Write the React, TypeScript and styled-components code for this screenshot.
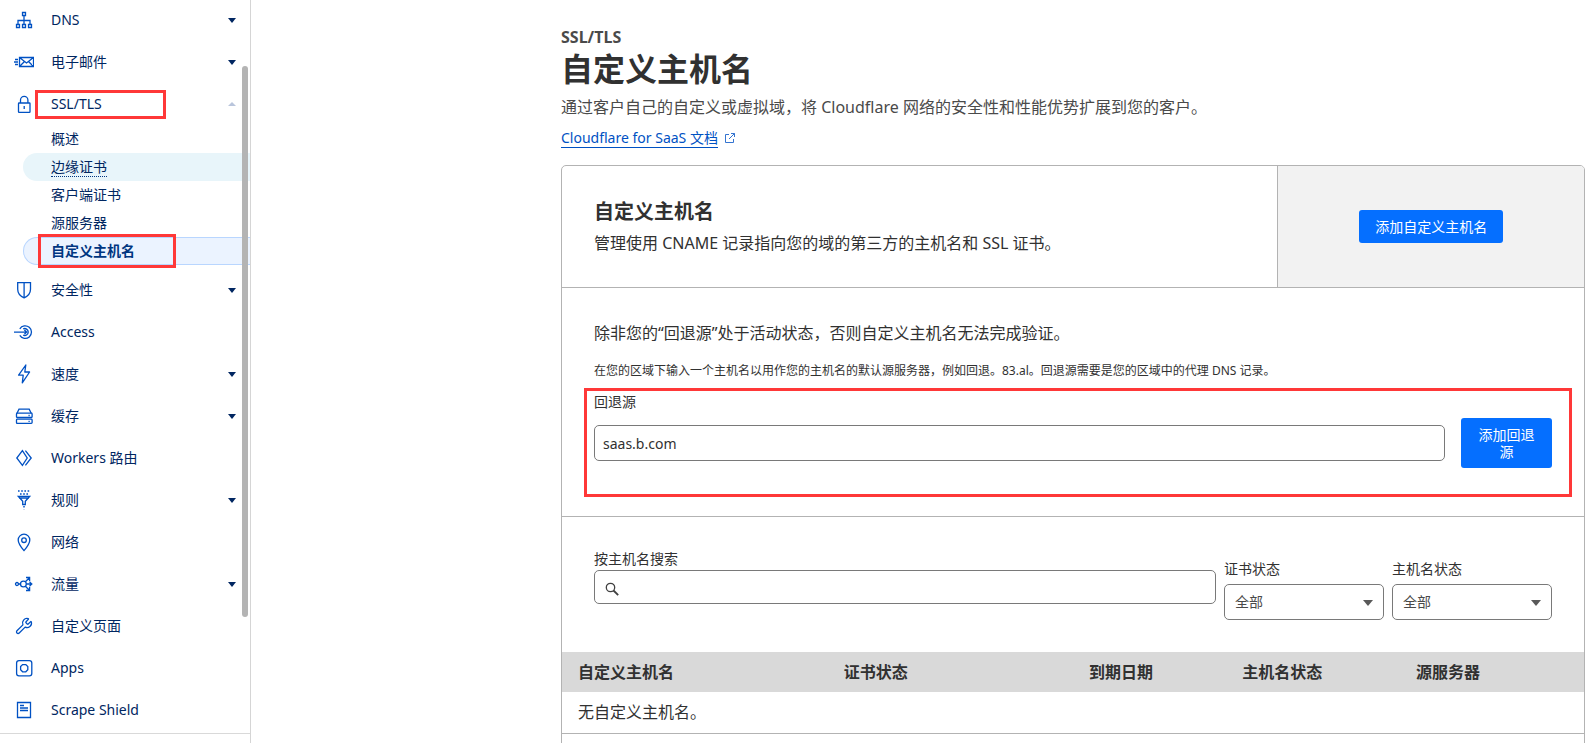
import React from "react";
import styled, { createGlobalStyle, css } from "styled-components";
import { Wrench } from "lucide-react";

const GlobalStyle = createGlobalStyle`
  *, *::before, *::after { box-sizing: border-box; }
  body {
    margin: 0;
    background: #fff;
    color: #313131;
    font-family: "Noto Sans", "Noto Sans CJK SC", sans-serif;
    font-size: 14px;
    line-height: 20px;
  }
  h1, h2, p, ul { margin: 0; padding: 0; }
  ul { list-style: none; }
  button, input, select { font: inherit; color: inherit; }
`;

const Page = styled.div`
  display: flex;
  height: 100vh;
  overflow: hidden;
`;

/* ---------- Sidebar ---------- */

const Sidebar = styled.aside`
  position: relative;
  display: flex;
  flex-direction: column;
  flex: 0 0 251px;
  border-right: 1px solid #d5d5d5;
`;

const Nav = styled.nav`
  flex: none;
  margin-top: -1px;
  padding-bottom: 2px;
  border-bottom: 1px solid #d9d9d9;
`;

const NavLink = styled.a`
  position: relative;
  display: flex;
  align-items: center;
  height: 42px;
  padding: 0 14px;
  color: #002661;
  text-decoration: none;
`;

const NavIcon = styled.svg`
  flex: none;
  width: 20px;
  height: 20px;
  margin-right: 17px;
  color: #0051c3;
  fill: none;
  stroke: currentColor;
  stroke-width: 1.3;
`;

const NavLabel = styled.span`
  flex: 1;
`;

const Caret = styled.span<{ $open?: boolean }>`
  width: 0;
  height: 0;
  border: 4px solid transparent;
  ${(p) =>
    p.$open
      ? css`
          border-width: 0 4px 4px;
          border-bottom-color: #b9c5dc;
        `
      : css`
          border-width: 5px 4px 0;
          border-top-color: #002661;
        `}
`;

const SubList = styled.ul`
  padding: 0 0 4px 23px;
`;

const SubLink = styled.a<{ $state?: "hover" | "active" }>`
  position: relative;
  display: flex;
  align-items: center;
  height: 28px;
  padding-left: 27px;
  border: 1px solid transparent;
  border-right: 0;
  border-radius: 14px 0 0 14px;
  color: #002661;
  text-decoration: none;
  ${(p) =>
    p.$state === "hover" &&
    css`
      background: #e8f5fa;
    `}
  ${(p) =>
    p.$state === "active" &&
    css`
      background: #ebf3ff;
      border-color: #b9d6ff;
      color: #003681;
      font-weight: 700;
    `}
`;

const SubText = styled.span<{ $dotted?: boolean }>`
  border-bottom: 1px ${(p) => (p.$dotted ? "dotted #003681" : "solid transparent")};
  line-height: 19px;
`;

const ScrollThumb = styled.div`
  position: absolute;
  top: 66px;
  right: 2px;
  width: 6px;
  height: 551px;
  border-radius: 3px;
  background: #b4b4b4;
`;

const Mark = styled.span<{ $inset: string }>`
  position: absolute;
  inset: ${(p) => p.$inset};
  border: 3px solid #ff3838;
  pointer-events: none;
`;

/* ---------- Main column ---------- */

const Main = styled.main`
  flex: 1;
  min-width: 0;
  padding: 27px 10px 0;
`;

const Content = styled.div`
  width: 100%;
  max-width: 1024px;
  margin-left: auto;
`;

const Eyebrow = styled.p`
  color: #4a4a4a;
  font-size: 16px;
  font-weight: 700;
`;

const Title = styled.h1`
  margin-bottom: 4px;
  font-size: 32px;
  font-weight: 700;
  line-height: 44px;
`;

const Lead = styled.p`
  color: #4a4a4a;
  font-size: 16px;
  line-height: 24px;
`;

const DocRow = styled.p`
  display: flex;
  align-items: center;
  gap: 6px;
  margin-top: 9px;
`;

const DocLink = styled.a`
  border-bottom: 1px solid #0051c3;
  color: #0051c3;
  line-height: 19px;
  text-decoration: none;
`;

const ExternalIcon = styled.svg`
  width: 12px;
  height: 12px;
  fill: none;
  stroke: #3474d0;
`;

const Card = styled.section`
  margin-top: 17px;
  border: 1px solid #b3b3b3;
  border-radius: 5px;
  overflow: hidden;
`;

const CardHead = styled.header`
  display: grid;
  grid-template-columns: 7fr 3fr;
  border-bottom: 1px solid #b3b3b3;
`;

const HeadText = styled.div`
  padding: 30px 32px 29px;
`;

const CardTitle = styled.h2`
  font-size: 20px;
  font-weight: 700;
  line-height: 32px;
`;

const Text = styled.p<{ $small?: boolean }>`
  font-size: ${(p) => (p.$small ? 12 : 16)}px;
  line-height: ${(p) => (p.$small ? 20 : 30)}px;
`;

const HeadAction = styled.div`
  display: flex;
  align-items: center;
  justify-content: center;
  border-left: 1px solid #b3b3b3;
  background: #f2f2f2;
`;

const Button = styled.button<{ $narrow?: boolean }>`
  flex: none;
  width: ${(p) => (p.$narrow ? "91px" : "auto")};
  padding: 8px 16px;
  border: 0;
  border-radius: 3px;
  background: #056fff;
  color: #fff;
  line-height: 17px;
`;

const Origin = styled.div`
  padding: 30px 32px 19px;
  border-bottom: 1px solid #b3b3b3;
`;

const OriginHint = styled(Text)`
  margin: 13px 0 7px;
`;

const OriginBox = styled.div`
  position: relative;
  height: 109px;
  padding-top: 4px;
`;

const Label = styled.label`
  display: block;
`;

const OriginRow = styled.div`
  display: flex;
  align-items: center;
  gap: 16px;
  padding-top: 6px;
`;

const field = css`
  border: 1px solid #797979;
  border-radius: 5px;
  background: #fff;
`;

const TextInput = styled.input`
  ${field}
  flex: 1;
  min-width: 0;
  height: 36px;
  padding: 0 8px;
`;

const Filters = styled.div`
  display: flex;
  gap: 8px;
  padding: 32px;
`;

const SearchField = styled.div`
  flex: 1;
  min-width: 0;
`;

const SearchBox = styled.div`
  ${field}
  display: flex;
  align-items: center;
  gap: 8px;
  height: 34px;
  margin-top: 1px;
  padding: 0 10px;
`;

const SearchIcon = styled.svg`
  flex: none;
  width: 14px;
  height: 14px;
  margin-top: 3px;
  fill: none;
  stroke: #404040;
`;

const SearchInput = styled.input`
  flex: 1;
  min-width: 0;
  border: 0;
  outline: 0;
  background: transparent;
`;

const SelectField = styled.div`
  flex: 0 0 160px;
  padding-top: 10px;
`;

const SelectBox = styled.div`
  position: relative;
  margin-top: 5px;
`;

const Select = styled.select`
  ${field}
  appearance: none;
  display: block;
  width: 100%;
  height: 36px;
  padding: 0 28px 0 10px;
  color: #4a4a4a;
`;

const SelectArrow = styled.span`
  position: absolute;
  top: 16px;
  right: 11px;
  border: 5px solid transparent;
  border-width: 6px 5px 0;
  border-top-color: #595959;
  pointer-events: none;
`;

const Table = styled.table`
  width: 100%;
  border-collapse: collapse;
  table-layout: fixed;
  font-size: 16px;
  text-align: left;
`;

const Th = styled.th<{ $width: number }>`
  width: ${(p) => p.$width}%;
  height: 40px;
  padding: 0 16px;
  background: #d9d9d9;
  font-weight: 600;
`;

const Td = styled.td`
  height: 41px;
  padding: 0 16px;
  border-bottom: 1px solid #b3b3b3;
`;

const CardFoot = styled.footer`
  height: 48px;
`;

/* ---------- Data ---------- */

const icons: Record<string, React.ReactNode> = {
  dns: (
    <path d="M8.5 2.5h3v3h-3zM10 5.5v9M4 14.5v-4h12v4M2.5 14.5h3v3h-3zM8.5 14.5h3v3h-3zM14.5 14.5h3v3h-3z" />
  ),
  mail: (
    <path d="M5.5 5.5h14v9h-14zM5.5 5.5l7 5.5 7-5.5M5.5 14.5l5-5M19.5 14.5l-5-5M1 7.5h3M0 10h4M1 12.5h3" />
  ),
  lock: (
    <>
      <rect x="4.5" y="9" width="11.5" height="9.3" rx="0.6" />
      <path d="M6.5 9V6a3.7 3.7 0 0 1 7.4 0v3M10.2 12v3" />
    </>
  ),
  shield: <path d="M3.7 2.6h12.8v6.6c0 4-2.8 7-6.4 8.6-3.6-1.6-6.4-4.6-6.4-8.6zM10.1 2.6v15" />,
  access: (
    <path d="M5.8 6.8a6.3 6.3 0 1 1 0 6.6M9.2 6.9a3.5 3.5 0 1 1 0 6.3M0 10.1h12.6M10.4 8l2.2 2.1-2.2 2.1" />
  ),
  bolt: <path d="M11.8 1L4.6 11.2h4.6l-.9 7.6L15.6 8h-4.8z" strokeLinejoin="round" />,
  cache: (
    <>
      <path d="M3 7.2l2-4.1h10.2l2 4.1M14.5 9.5h1.2M14.5 15.3h1.2" />
      <rect x="2.5" y="7.2" width="15.6" height="4.3" rx="0.8" />
      <rect x="2.5" y="13.2" width="15.6" height="4.2" rx="0.8" />
    </>
  ),
  workers: <path d="M8.4 2.6L2.8 10l5.6 7.4L13.2 10zM11.4 2.6L17.2 10l-5.8 7.4" />,
  rules: (
    <>
      <path d="M4.3 6.3h11.4l-4.4 4.9v3.3H8.7v-3.3zM5 8h10" />
      <path d="M4 1h12M6 4h8M10 16v3.5" strokeDasharray="1.6 1.6" strokeWidth="1.5" />
    </>
  ),
  pin: (
    <>
      <path d="M10 18.6C6.5 14.6 4.2 11.5 4.2 8a5.8 5.8 0 0 1 11.6 0c0 3.5-2.3 6.6-5.8 10.6z" />
      <circle cx="10" cy="8.2" r="2.3" />
    </>
  ),
  traffic: (
    <>
      <circle cx="3" cy="10" r="1.5" />
      <circle cx="9.4" cy="10" r="2.9" />
      <path d="M4.5 10h2M12.3 10h5.4M15.6 8l2.2 2-2.2 2M11.4 7.8l4-4M12 3.5h3.6v3.7M11.4 12.2l4 4M12 16.5h3.6v-3.7" />
    </>
  ),
  wrench: <Wrench x={1} y={1} width={18} height={18} strokeWidth={1.7} />,
  apps: (
    <>
      <rect x="2.6" y="2.6" width="15.2" height="15.2" rx="2.4" />
      <path d="M8.6 6.6h3.2l2 2v3.2l-2 2H8.6l-2-2V8.6z" />
    </>
  ),
  page: <path d="M3.5 2.5h13v15h-13zM6 5.5h4M6 8h8M6 10.5h8" />,
};

const before = [
  { icon: "dns", label: "DNS", menu: true },
  { icon: "mail", label: "电子邮件", menu: true },
];

const after = [
  { icon: "shield", label: "安全性", menu: true },
  { icon: "access", label: "Access" },
  { icon: "bolt", label: "速度", menu: true },
  { icon: "cache", label: "缓存", menu: true },
  { icon: "workers", label: "Workers 路由" },
  { icon: "rules", label: "规则", menu: true },
  { icon: "pin", label: "网络" },
  { icon: "traffic", label: "流量", menu: true },
  { icon: "wrench", label: "自定义页面" },
  { icon: "apps", label: "Apps" },
  { icon: "page", label: "Scrape Shield" },
];

const columns: [string, number][] = [
  ["自定义主机名", 26],
  ["证书状态", 24],
  ["到期日期", 15],
  ["主机名状态", 17],
  ["源服务器", 18],
];

function NavItem(props: {
  icon: string;
  label: string;
  menu?: boolean;
  open?: boolean;
  mark?: string;
  children?: React.ReactNode;
}) {
  return (
    <li>
      <NavLink href="#">
        <NavIcon viewBox="0 0 20 20" aria-hidden="true">
          {icons[props.icon]}
        </NavIcon>
        <NavLabel>{props.label}</NavLabel>
        {props.menu && <Caret $open={props.open} />}
        {props.mark && <Mark $inset={props.mark} />}
      </NavLink>
      {props.children}
    </li>
  );
}

function StatusSelect({ id, label }: { id: string; label: string }) {
  return (
    <SelectField>
      <Label htmlFor={id}>{label}</Label>
      <SelectBox>
        <Select id={id}>
          <option>全部</option>
        </Select>
        <SelectArrow />
      </SelectBox>
    </SelectField>
  );
}

export default function App() {
  return (
    <Page lang="zh-CN">
      <GlobalStyle />
      <Sidebar>
        <Nav>
          <ul>
            {before.map((item) => (
              <NavItem key={item.label} {...item} />
            ))}
            <NavItem icon="lock" label="SSL/TLS" menu open mark="7px 84px 6px 35px">
              <SubList>
                <li>
                  <SubLink href="#">
                    <SubText>概述</SubText>
                  </SubLink>
                </li>
                <li>
                  <SubLink href="#" $state="hover">
                    <SubText $dotted>边缘证书</SubText>
                  </SubLink>
                </li>
                <li>
                  <SubLink href="#">
                    <SubText>客户端证书</SubText>
                  </SubLink>
                </li>
                <li>
                  <SubLink href="#">
                    <SubText>源服务器</SubText>
                  </SubLink>
                </li>
                <li>
                  <SubLink href="#" $state="active">
                    <SubText>自定义主机名</SubText>
                    <Mark $inset="-4px 74px -4px 14px" />
                  </SubLink>
                </li>
              </SubList>
            </NavItem>
            {after.map((item) => (
              <NavItem key={item.label} {...item} />
            ))}
          </ul>
        </Nav>
        <ScrollThumb />
      </Sidebar>

      <Main>
        <Content>
          <Eyebrow>SSL/TLS</Eyebrow>
          <Title>自定义主机名</Title>
          <Lead>通过客户自己的自定义或虚拟域，将 Cloudflare 网络的安全性和性能优势扩展到您的客户。</Lead>
          <DocRow>
            <DocLink href="#">Cloudflare for SaaS 文档</DocLink>
            <ExternalIcon viewBox="0 0 12 12" aria-hidden="true">
              <path d="M5 2.5H1.5v8h8V7M7 1.5h3.5V5M10.5 1.5L5 7" />
            </ExternalIcon>
          </DocRow>

          <Card>
            <CardHead>
              <HeadText>
                <CardTitle>自定义主机名</CardTitle>
                <Text>管理使用 CNAME 记录指向您的域的第三方的主机名和 SSL 证书。</Text>
              </HeadText>
              <HeadAction>
                <Button type="button">添加自定义主机名</Button>
              </HeadAction>
            </CardHead>

            <Origin>
              <Text>除非您的“回退源”处于活动状态，否则自定义主机名无法完成验证。</Text>
              <OriginHint $small>
                在您的区域下输入一个主机名以用作您的主机名的默认源服务器，例如回退。83.al。回退源需要是您的区域中的代理 DNS 记录。
              </OriginHint>
              <OriginBox>
                <Mark $inset="0 -20px 0 -10px" />
                <Label htmlFor="origin">回退源</Label>
                <OriginRow>
                  <TextInput id="origin" type="text" defaultValue="saas.b.com" />
                  <Button type="button" $narrow>
                    添加回退源
                  </Button>
                </OriginRow>
              </OriginBox>
            </Origin>

            <Filters>
              <SearchField>
                <Label htmlFor="search">按主机名搜索</Label>
                <SearchBox>
                  <SearchIcon viewBox="0 0 14 14" aria-hidden="true">
                    <circle cx="5.5" cy="5.5" r="4.2" strokeWidth="1.3" />
                    <path d="M8.5 8.5l4.7 4.7" strokeWidth="1.8" />
                  </SearchIcon>
                  <SearchInput id="search" type="text" />
                </SearchBox>
              </SearchField>
              <StatusSelect id="cert" label="证书状态" />
              <StatusSelect id="host" label="主机名状态" />
            </Filters>

            <Table>
              <thead>
                <tr>
                  {columns.map(([name, width]) => (
                    <Th key={name} scope="col" $width={width}>
                      {name}
                    </Th>
                  ))}
                </tr>
              </thead>
              <tbody>
                <tr>
                  <Td colSpan={5}>无自定义主机名。</Td>
                </tr>
              </tbody>
            </Table>
            <CardFoot />
          </Card>
        </Content>
      </Main>
    </Page>
  );
}
